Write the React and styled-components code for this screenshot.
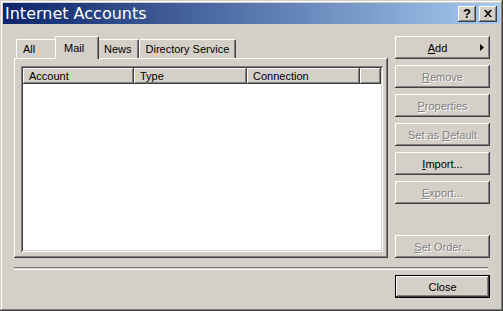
import React from 'react'
import styled, { createGlobalStyle, css } from 'styled-components'

const face = '#d4d0c8'

const GlobalStyle = createGlobalStyle`
    html, body {
        margin:0;
        padding:0;
        background:${face};
    }
    body {
        font-family:"Liberation Sans", Arial, sans-serif;
        font-size:11px;
        color:#000;
    }
`

const raised = css`
    box-shadow:
        inset -1px -1px #404040,
        inset 1px 1px #ffffff,
        inset -2px -2px #808080,
        inset 2px 2px ${face};
`

const Window = styled.div`
    width:503px;
    height:311px;
    box-sizing:border-box;
    padding:3px;
    background:${face};
    display:flex;
    flex-direction:column;
    box-shadow:
        inset -1px -1px #404040,
        inset 1px 1px ${face},
        inset -2px -2px #808080,
        inset 2px 2px #ffffff;
`

const TitleBar = styled.div`
    height:21px;
    flex:none;
    display:flex;
    align-items:center;
    padding:0 3px 0 1px;
    background:linear-gradient(to right, #0a246a, #a6caf0);
`

const Title = styled.div`
    flex:1;
    color:#ffffff;
    font-family:"DejaVu Sans", Verdana, sans-serif;
    font-size:16px;
    line-height:21px;
    padding-left:1px;
    margin-top:-1px;
`

const TitleButtons = styled.div`
    display:flex;
    gap:3px;
`

const CaptionButton = styled.div`
    width:18px;
    height:16px;
    background:${face};
    display:flex;
    align-items:center;
    justify-content:center;
    font-weight:bold;
    font-size:13px;
    ${raised};
`

const Body = styled.div`
    flex:1;
    display:flex;
    flex-direction:column;
    padding:12px 10px 0 11px;
`

const Top = styled.div`
    display:flex;
    gap:7px;
`

const TabArea = styled.div`
    width:374px;
    display:flex;
    flex-direction:column;
`

const TabStrip = styled.div`
    height:22px;
    display:flex;
    align-items:flex-end;
    padding-left:2px;
    position:relative;
    z-index:1;
`

const Tab = styled.div`
    box-sizing:border-box;
    height:${({active}) => (active ? '23px' : '19px')};
    margin:${({active}) => (active ? '0 -2px -1px -2px' : '0')};
    padding:${({active}) => (active ? '5px 8px 0 8px' : '3px 6px 0 6px')};
    min-width:${({wide}) => wide}px;
    background:${face};
    border-top:1px solid #ffffff;
    border-left:1px solid #ffffff;
    border-right:1px solid #404040;
    border-radius:2px 2px 0 0;
    box-shadow:inset -1px 0 #808080;
    position:relative;
    z-index:${({active}) => (active ? 2 : 1)};
    white-space:nowrap;
`

const Panel = styled.div`
    height:200px;
    box-sizing:border-box;
    padding:8px 5px 6px 7px;
    box-shadow:
        inset -1px -1px #404040,
        inset 1px 1px #ffffff,
        inset -2px -2px #808080;
`

const ListView = styled.div`
    height:100%;
    box-sizing:border-box;
    background:#ffffff;
    padding:2px;
    box-shadow:
        inset 1px 1px #808080,
        inset -1px -1px #ffffff,
        inset 2px 2px #404040,
        inset -2px -2px ${face};
`

const Header = styled.div`
    display:flex;
    height:16px;
`

const HeaderCell = styled.div`
    box-sizing:border-box;
    width:${({w}) => (w ? `${w}px` : 'auto')};
    flex:${({w}) => (w ? 'none' : '1')};
    background:${face};
    padding:2px 0 0 6px;
    line-height:12px;
    box-shadow:
        inset -1px -1px #404040,
        inset 1px 1px #ffffff,
        inset -2px -2px #808080;
`

const ButtonColumn = styled.div`
    width:95px;
    display:flex;
    flex-direction:column;
    gap:6px;
`

const Button = styled.div`
    box-sizing:border-box;
    width:95px;
    height:23px;
    flex:none;
    display:flex;
    align-items:center;
    justify-content:center;
    background:${face};
    color:${({disabled}) => (disabled ? '#808080' : '#000000')};
    text-shadow:${({disabled}) => (disabled ? '1px 1px 0 #ffffff' : 'none')};
    margin-top:${({pushDown}) => (pushDown ? 'auto' : '0')};
    ${raised};
    ${({isDefault}) => isDefault && css`
        box-shadow:
            inset 0 0 0 1px #000000,
            inset -2px -2px #404040,
            inset 2px 2px #ffffff,
            inset -3px -3px #808080;
    `}
`

const Label = styled.span`
    flex:1;
    text-align:center;
`

const Arrow = styled.svg`
    width:4px;
    height:7px;
    margin-right:6px;
`

const Separator = styled.div`
    margin:9px 2px 0 0;
    height:1px;
    border-top:1px solid #808080;
    border-bottom:1px solid #ffffff;
`

const Footer = styled.div`
    display:flex;
    justify-content:flex-end;
    margin-top:5px;
`

const tabs = [
    { title: 'All', wide: 41 },
    { title: 'Mail', wide: 44, active: true },
    { title: 'News', wide: 40 },
    { title: 'Directory Service', wide: 40 },
]

const columns = [
    { title: 'Account', w: 111 },
    { title: 'Type', w: 113 },
    { title: 'Connection', w: 113 },
    { title: '' },
]

const buttons = [
    { pre: '', key: 'R', rest: 'emove', disabled: true },
    { pre: '', key: 'P', rest: 'roperties', disabled: true },
    { pre: 'Set as ', key: 'D', rest: 'efault', disabled: true },
    { pre: '', key: 'I', rest: 'mport...' },
    { pre: '', key: 'E', rest: 'xport...', disabled: true },
]

const App = () => {
    return (
        <Window>
            <GlobalStyle />
            <TitleBar>
                <Title>Internet Accounts</Title>
                <TitleButtons>
                    <CaptionButton>?</CaptionButton>
                    <CaptionButton>
                        <svg width="8" height="7" viewBox="0 0 8 7">
                            <path d="M0 0h2l2 2.2L6 0h2L5 3.5 8 7H6L4 4.8 2 7H0l3-3.5z" fill="#000" />
                        </svg>
                    </CaptionButton>
                </TitleButtons>
            </TitleBar>
            <Body>
                <Top>
                    <TabArea>
                        <TabStrip>
                            {tabs.map((tab, index) => (
                                <Tab key={index} active={tab.active} wide={tab.wide}>
                                    {tab.title}
                                </Tab>
                            ))}
                        </TabStrip>
                        <Panel>
                            <ListView>
                                <Header>
                                    {columns.map((col, index) => (
                                        <HeaderCell key={index} w={col.w}>{col.title}</HeaderCell>
                                    ))}
                                </Header>
                            </ListView>
                        </Panel>
                    </TabArea>
                    <ButtonColumn>
                        <Button>
                            <Label><u>A</u>dd</Label>
                            <Arrow viewBox="0 0 4 7">
                                <polygon points="0,0 4,3.5 0,7" fill="#000" />
                            </Arrow>
                        </Button>
                        {buttons.map((b, index) => (
                            <Button key={index} disabled={b.disabled}>
                                <span>{b.pre}<u>{b.key}</u>{b.rest}</span>
                            </Button>
                        ))}
                        <Button disabled pushDown>
                            <span><u>S</u>et Order...</span>
                        </Button>
                    </ButtonColumn>
                </Top>
                <Separator />
                <Footer>
                    <Button isDefault>Close</Button>
                </Footer>
            </Body>
        </Window>
    )
}

export default App
